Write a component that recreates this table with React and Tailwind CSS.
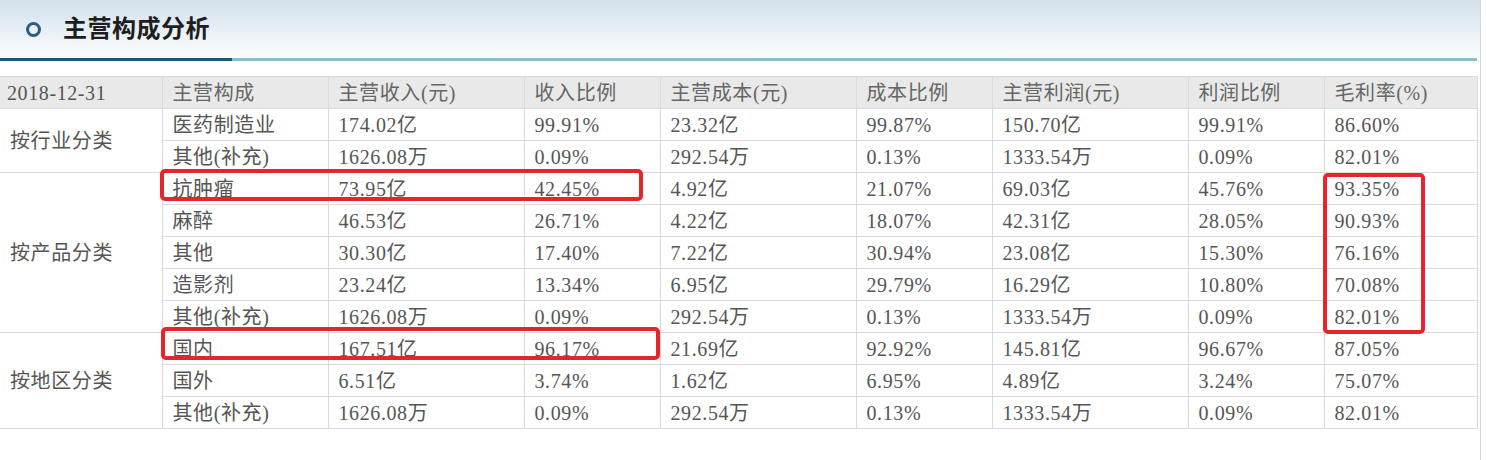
const groups = [
  {
    name: '按行业分类',
    rows: [
      ['医药制造业', '174.02亿', '99.91%', '23.32亿', '99.87%', '150.70亿', '99.91%', '86.60%'],
      ['其他(补充)', '1626.08万', '0.09%', '292.54万', '0.13%', '1333.54万', '0.09%', '82.01%'],
    ],
  },
  {
    name: '按产品分类',
    rows: [
      ['抗肿瘤', '73.95亿', '42.45%', '4.92亿', '21.07%', '69.03亿', '45.76%', '93.35%'],
      ['麻醉', '46.53亿', '26.71%', '4.22亿', '18.07%', '42.31亿', '28.05%', '90.93%'],
      ['其他', '30.30亿', '17.40%', '7.22亿', '30.94%', '23.08亿', '15.30%', '76.16%'],
      ['造影剂', '23.24亿', '13.34%', '6.95亿', '29.79%', '16.29亿', '10.80%', '70.08%'],
      ['其他(补充)', '1626.08万', '0.09%', '292.54万', '0.13%', '1333.54万', '0.09%', '82.01%'],
    ],
  },
  {
    name: '按地区分类',
    rows: [
      ['国内', '167.51亿', '96.17%', '21.69亿', '92.92%', '145.81亿', '96.67%', '87.05%'],
      ['国外', '6.51亿', '3.74%', '1.62亿', '6.95%', '4.89亿', '3.24%', '75.07%'],
      ['其他(补充)', '1626.08万', '0.09%', '292.54万', '0.13%', '1333.54万', '0.09%', '82.01%'],
    ],
  },
]

const headers = ['2018-12-31', '主营构成', '主营收入(元)', '收入比例', '主营成本(元)', '成本比例', '主营利润(元)', '利润比例', '毛利率(%)']
const widths = [162, 166, 196, 136, 196, 136, 196, 136, 153]

const cell = 'h-[32px] border border-[#dadada] pl-[10px] pr-1 text-left align-middle whitespace-nowrap font-normal'

export default function App() {
  return (
    <div
      className="w-[1481px] h-[460px] bg-white border-r border-[#d8d8d8] overflow-hidden"
      style={{ fontFamily: '"Liberation Serif", "Noto Sans CJK SC", serif' }}
    >
      {/* title bar */}
      <div className="h-[58px] bg-gradient-to-b from-[#d3e0ec] to-[#fbfdfe] flex items-center">
        <span className="ml-[26px] w-[15px] h-[15px] rounded-full border-[3px] border-[#2a5f7f]" />
        <h2 className="ml-[22px] text-[24px] leading-none font-bold text-[#1e1e1e] tracking-[0.5px]">主营构成分析</h2>
      </div>
      <div className="flex h-[3px]">
        <div className="w-[232px] bg-[#1e5876]" />
        <div className="w-[1245px] bg-[#8fbccd]" />
      </div>

      <div className="relative mt-[15px] w-[1477px]">
        <table className="table-fixed border-collapse w-[1477px] text-[20px] leading-none tracking-[0.6px] text-[#555]">
          <colgroup>
            {widths.map((w, i) => (
              <col key={i} style={{ width: w }} />
            ))}
          </colgroup>
          <thead>
            <tr className="bg-[#e9e9e9] text-[#666]">
              {headers.map((h) => (
                <th key={h} className={`${cell} border-l-0 first:pl-[7px] first:text-[#555]`}>
                  {h}
                </th>
              ))}
            </tr>
          </thead>
          <tbody>
            {groups.map((g) =>
              g.rows.map((r, ri) => (
                <tr key={g.name + ri}>
                  {ri === 0 && (
                    <td rowSpan={g.rows.length} className={`${cell} border-l-0 pl-[8px]`}>
                      {g.name}
                    </td>
                  )}
                  {r.map((v, ci) => (
                    <td key={ci} className={cell}>
                      {v}
                    </td>
                  ))}
                </tr>
              ))
            )}
          </tbody>
        </table>

        {/* highlight marks */}
        <div className="absolute left-[160px] top-[93px] w-[483px] h-[32px] border-[4px] border-[#e2262b] rounded-[5px]" />
        <div className="absolute left-[161px] top-[251px] w-[499px] h-[33px] border-[4px] border-[#e2262b] rounded-[5px]" />
        <div className="absolute left-[1323px] top-[97px] w-[102px] h-[161px] border-[4px] border-[#e2262b] rounded-[5px]" />
      </div>
    </div>
  )
}
